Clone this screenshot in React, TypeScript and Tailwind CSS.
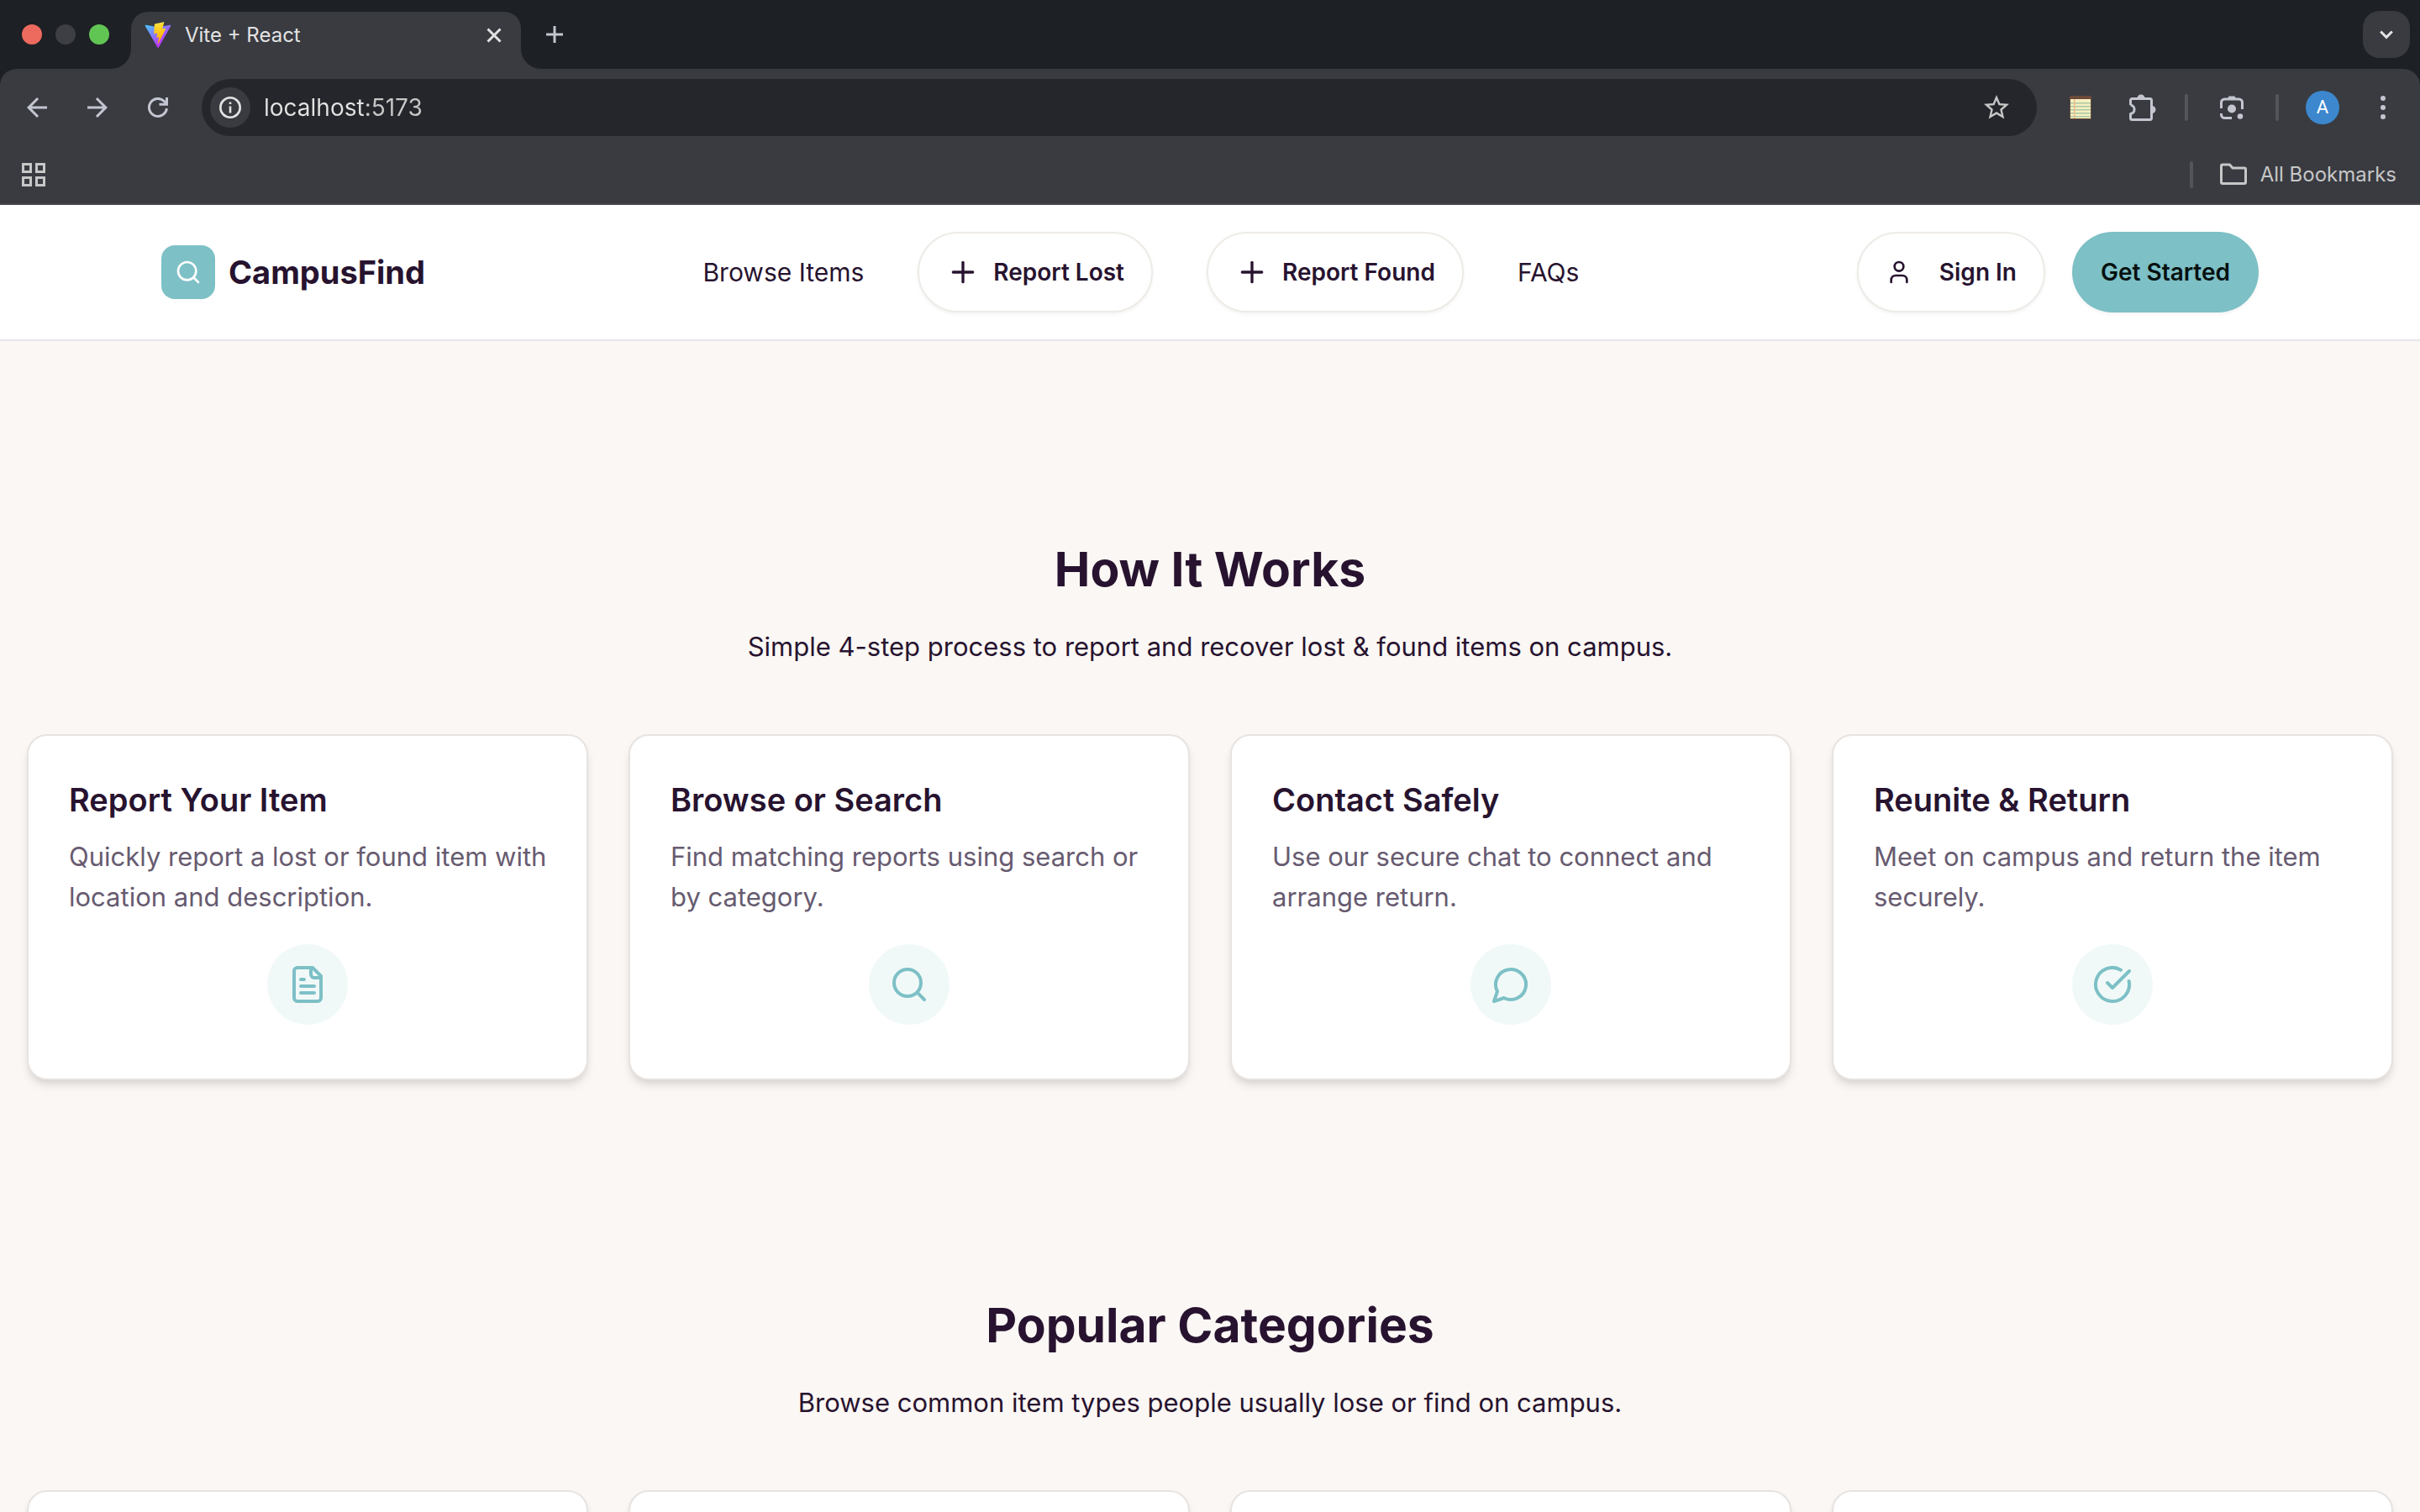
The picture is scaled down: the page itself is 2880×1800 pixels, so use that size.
import React from "react";
import type { ReactNode } from "react";

function ViteLogo() {
  return (
    <svg viewBox="0 0 410 404" className="size-8 shrink-0" aria-hidden="true">
      <defs>
        <linearGradient id="vite-a" x1="6" y1="33" x2="235" y2="344" gradientUnits="userSpaceOnUse">
          <stop stopColor="#41D1FF" />
          <stop offset="1" stopColor="#BD34FE" />
        </linearGradient>
        <linearGradient id="vite-b" x1="194.651" y1="8.818" x2="236.076" y2="292.989" gradientUnits="userSpaceOnUse">
          <stop stopColor="#FFEA83" />
          <stop offset="0.083" stopColor="#FFDD35" />
          <stop offset="1" stopColor="#FFA800" />
        </linearGradient>
      </defs>
      <path
        fill="url(#vite-a)"
        d="M399.641 59.5246L215.643 388.545C211.844 395.338 202.084 395.378 198.228 388.618L10.5817 59.5563C6.38087 52.1896 12.6802 43.2665 21.0281 44.7586L205.223 77.6824C206.398 77.8924 207.601 77.8904 208.776 77.6763L389.119 44.8058C397.439 43.2894 403.768 52.1434 399.641 59.5246Z"
      />
      <path
        fill="url(#vite-b)"
        d="M292.965 1.5744L156.801 28.2552C154.563 28.6937 152.906 30.5903 152.771 32.8664L144.395 174.33C144.198 177.662 147.258 180.248 150.51 179.498L188.42 170.749C191.967 169.931 195.172 173.055 194.443 176.622L183.18 231.775C182.422 235.487 185.907 238.661 189.532 237.56L212.947 230.446C216.577 229.344 220.065 232.527 219.297 236.242L201.398 322.875C200.278 328.294 207.486 331.249 210.492 326.603L212.5 323.5L323.454 102.072C325.312 98.3645 322.108 94.137 318.036 94.9228L279.014 102.454C275.347 103.161 272.227 99.746 273.262 96.1583L298.731 7.86689C299.767 4.27314 296.636 0.855181 292.965 1.5744Z"
      />
    </svg>
  );
}

function Stroke({ className, width = 2, children }: { className: string; width?: number; children: ReactNode }) {
  return (
    <svg
      viewBox="0 0 24 24"
      fill="none"
      stroke="currentColor"
      strokeWidth={width}
      strokeLinecap="round"
      strokeLinejoin="round"
      className={className}
      aria-hidden="true"
    >
      {children}
    </svg>
  );
}

function SearchShape() {
  return (
    <>
      <circle cx="11" cy="11" r="8" />
      <path d="m21 21-4.3-4.3" />
    </>
  );
}

function PlusIcon() {
  return (
    <Stroke className="size-10">
      <path d="M5 12h14" />
      <path d="M12 5v14" />
    </Stroke>
  );
}

function IconButton({ label, children }: { label: string; children: ReactNode }) {
  return (
    <button aria-label={label} className="flex h-12 w-[72px] shrink-0 items-center justify-center text-[#c3c6d0]">
      {children}
    </button>
  );
}

function TabStrip() {
  return (
    <div className="flex h-[82px] items-end pl-[26px] pr-3">
      <div className="mr-0.5 flex h-full items-center gap-4">
        <button aria-label="Close window" className="size-6 rounded-full bg-[#ed6a5e]" />
        <button aria-label="Minimize window" className="size-6 rounded-full bg-[#3e3f44]" />
        <button aria-label="Zoom window" className="size-6 rounded-full bg-[#61c554]" />
      </div>
      <span className="size-6 bg-[#393b41]">
        <span className="block size-full rounded-br-full bg-[#1d2025]" />
      </span>
      <div className="flex h-[68px] w-[464px] items-center gap-4 rounded-t-[20px] bg-[#393b41] pb-3 pl-4 pr-3">
        <ViteLogo />
        <span className="flex-1 text-[24px] leading-8 text-[#e3e3e3]">Vite + React</span>
        <button aria-label="Close tab" className="flex size-10 items-center justify-center text-[#e3e3e3]">
          <svg viewBox="0 0 18 18" className="size-[18px]" fill="none" stroke="currentColor" strokeWidth="3">
            <path d="M1.5 1.5l15 15M16.5 1.5l-15 15" />
          </svg>
        </button>
      </div>
      <span className="size-6 bg-[#393b41]">
        <span className="block size-full rounded-bl-full bg-[#1d2025]" />
      </span>
      <button aria-label="New tab" className="flex h-full w-8 items-center justify-center text-[#c3c6d0]">
        <svg viewBox="0 0 20 20" className="size-5" fill="none" stroke="currentColor" strokeWidth="3">
          <path d="M10 0v20M0 10h20" />
        </svg>
      </button>
      <button
        aria-label="Search tabs"
        className="ml-auto flex size-14 items-center justify-center self-center rounded-[20px] bg-[#393b41] text-[#e3e3e3]"
      >
        <svg viewBox="0 0 16 11" className="h-[11px] w-4" fill="none" stroke="currentColor" strokeWidth="3">
          <path d="M1.2 1.5l6.8 6.8 6.8-6.8" />
        </svg>
      </button>
    </div>
  );
}

function NoteIcon() {
  return (
    <svg viewBox="0 0 26 28" className="h-7 w-[26px]" aria-hidden="true">
      <rect x="0" y="0" width="26" height="28" rx="1" fill="#6b4a38" />
      <rect x="1" y="4" width="24" height="23" fill="#f6efc0" />
      {[8, 12, 16, 20, 24].map((y) => (
        <rect key={y} x="1" y={y} width="24" height="1.5" fill="#a9c8a4" />
      ))}
      <rect x="5" y="4" width="1.5" height="23" fill="#eebb88" />
    </svg>
  );
}

function Toolbar() {
  return (
    <div className="rounded-t-[20px] border-b-2 border-[#4a474c] bg-[#393b41] pt-3">
      <div className="flex h-[68px] items-center px-2">
        <IconButton label="Back">
          <svg viewBox="0 0 24 24" className="size-9" fill="currentColor">
            <path d="M20 11H7.83l5.59-5.59L12 4l-8 8 8 8 1.41-1.41L7.83 13H20v-2z" />
          </svg>
        </IconButton>
        <IconButton label="Forward">
          <svg viewBox="0 0 24 24" className="size-9" fill="currentColor">
            <path d="M4 11h12.17l-5.59-5.59L12 4l8 8-8 8-1.41-1.41L16.17 13H4v-2z" />
          </svg>
        </IconButton>
        <IconButton label="Reload">
          <svg viewBox="0 0 24 24" className="size-6" fill="none" stroke="currentColor" strokeWidth="3">
            <path d="M22.4 13A10.5 10.5 0 1 1 19.5 4.6L22 7.2" />
            <path d="M22.5 0v8.2H13.5" />
          </svg>
        </IconButton>
        <div className="ml-4 flex h-full flex-1 items-center rounded-full bg-[#25262b] pl-2.5 pr-3">
          <button
            aria-label="View site information"
            className="flex size-12 shrink-0 items-center justify-center rounded-full bg-[#393b41] text-[#e3e3e3]"
          >
            <svg viewBox="0 0 26 26" className="size-[26px]" fill="none" stroke="currentColor" strokeWidth="2.6">
              <circle cx="13" cy="13" r="11.7" />
              <path d="M13 11.5v8M13 6.5v2.6" />
            </svg>
          </button>
          <input
            aria-label="Address"
            defaultValue="localhost:5173"
            className="ml-4 h-10 min-w-0 flex-1 bg-[linear-gradient(90deg,#e3e3e3_121px,#c7c7c7_121px)] bg-clip-text text-[28px] leading-10 text-transparent caret-white outline-none"
          />
          <IconButton label="Bookmark this tab">
            <svg viewBox="0 0 24 24" className="size-9" fill="#c7c7c7">
              <path d="M22 9.24l-7.19-.62L12 2 9.19 8.63 2 9.24l5.46 4.73L5.82 21 12 17.27 18.18 21l-1.63-7.03L22 9.24zM12 15.4l-3.76 2.27 1-4.28-3.32-2.88 4.38-.38L12 6.1l1.71 4.04 4.38.38-3.32 2.88 1 4.28L12 15.4z" />
            </svg>
          </IconButton>
        </div>
        <div className="ml-4 flex gap-0.5">
          <IconButton label="Notes extension">
            <NoteIcon />
          </IconButton>
          <IconButton label="Extensions">
            <svg viewBox="0 0 32 32" className="size-8" fill="none" stroke="currentColor" strokeWidth="3">
              <path
                strokeLinejoin="round"
                d="M1.5 13V7.5a2 2 0 0 1 2-2H24.5a2 2 0 0 1 2 2V28.5a2 2 0 0 1-2 2H3.5a2 2 0 0 1-2-2V23.5a5.3 5.3 0 0 0 0-10.5"
              />
              <path fill="currentColor" stroke="none" d="M9.5 5a4.5 4.5 0 0 1 9 0zM27 14a4.5 4.5 0 0 1 0 9z" />
            </svg>
          </IconButton>
        </div>
        <span className="ml-3.5 h-8 w-1 rounded-full bg-[#53555c]" />
        <div className="mx-4">
          <IconButton label="Search with Lens">
            <svg viewBox="0 0 32 32" className="size-8" fill="none" stroke="currentColor" strokeWidth="3">
              <path d="M3.5 17V10a4 4 0 0 1 4-4H24.5a4 4 0 0 1 4 4v8M3.5 23v1.5a4 4 0 0 0 4 4H16" />
              <path fill="currentColor" stroke="none" d="M11 5.5l1.5-3h7l1.5 3z" />
              <circle cx="16" cy="17.5" r="5" fill="currentColor" stroke="none" />
              <circle cx="26" cy="26.5" r="3.3" fill="currentColor" stroke="none" />
            </svg>
          </IconButton>
        </div>
        <span className="h-8 w-1 rounded-full bg-[#53555c]" />
        <button aria-label="Profile" className="ml-4 flex w-[72px] shrink-0 justify-center">
          <span className="flex size-10 items-center justify-center rounded-full bg-[#3c87cd] font-[Roboto] text-[22px] leading-6 text-white">
            A
          </span>
        </button>
        <IconButton label="Menu">
          <svg viewBox="0 0 6 28" className="h-7 w-1.5" fill="currentColor">
            <circle cx="3" cy="3" r="3" />
            <circle cx="3" cy="14" r="3" />
            <circle cx="3" cy="25" r="3" />
          </svg>
        </IconButton>
      </div>
      <div className="mt-3 flex h-[68px] items-center justify-between pl-[26px] pr-7">
        <button aria-label="Apps" className="text-[#c7c7c7]">
          <svg viewBox="0 0 28 28" className="size-7" fill="none" stroke="currentColor" strokeWidth="3">
            <path d="M1.5 1.5h9v9h-9zM17.5 1.5h9v9h-9zM1.5 17.5h9v9h-9zM17.5 17.5h9v9h-9z" />
          </svg>
        </button>
        <div className="flex items-center">
          <span className="mr-8 h-8 w-1 rounded-full bg-[#53555c]" />
          <button className="flex items-center gap-4 text-[24px] leading-8 text-[#c7c7c7]">
            <svg viewBox="0 0 32 28" className="h-7 w-8" fill="none" stroke="currentColor" strokeWidth="3" strokeLinejoin="round">
              <path d="M1.5 3.5a1.5 1.5 0 0 1 1.5-1.5h8.5l3.5 4h14a1.5 1.5 0 0 1 1.5 1.5v15.5a1.5 1.5 0 0 1-1.5 1.5h-26a1.5 1.5 0 0 1-1.5-1.5z" />
            </svg>
            All Bookmarks
          </button>
        </div>
      </div>
    </div>
  );
}

const outline =
  "flex h-24 items-center rounded-full border-2 border-[#eeebe7] bg-white px-8 text-[28px] leading-10 font-semibold shadow-[0_2px_4px_rgba(0,0,0,0.05)]";

function SiteHeader() {
  return (
    <header className="border-b-2 border-[#e5e7eb] bg-white">
      <div className="mx-auto flex max-w-[2560px] items-center justify-between px-8 py-8">
        <a href="#" className="flex items-center gap-4">
          <span className="flex size-16 items-center justify-center rounded-2xl bg-[#7dc0c6] text-white">
            <Stroke className="size-8">
              <SearchShape />
            </Stroke>
          </span>
          <span className="text-[38px] leading-14 font-bold">CampusFind</span>
        </a>
        <nav className="flex items-center gap-16 text-[30px] leading-12">
          <a href="#browse">Browse Items</a>
          <button className={outline + " gap-4"}>
            <PlusIcon />
            Report Lost
          </button>
          <button className={outline + " gap-4"}>
            <PlusIcon />
            Report Found
          </button>
          <a href="#faqs">FAQs</a>
        </nav>
        <div className="flex items-center gap-8">
          <button className={outline + " gap-8"}>
            <Stroke className="size-8">
              <path d="M19 21v-2a4 4 0 0 0-4-4H9a4 4 0 0 0-4 4v2" />
              <circle cx="12" cy="7" r="4" />
            </Stroke>
            Sign In
          </button>
          <button className="flex h-24 items-center rounded-full bg-[#7dc0c6] px-[34px] text-[28px] leading-10 font-semibold text-[#06100f] shadow-[0_2px_4px_rgba(0,0,0,0.05)]">
            Get Started
          </button>
        </div>
      </div>
    </header>
  );
}

const steps: { title: string; text: string; icon: ReactNode }[] = [
  {
    title: "Report Your Item",
    text: "Quickly report a lost or found item with location and description.",
    icon: (
      <>
        <path d="M15 2H6a2 2 0 0 0-2 2v16a2 2 0 0 0 2 2h12a2 2 0 0 0 2-2V7Z" />
        <path d="M14 2v4a2 2 0 0 0 2 2h4" />
        <path d="M10 9H8" />
        <path d="M16 13H8" />
        <path d="M16 17H8" />
      </>
    ),
  },
  {
    title: "Browse or Search",
    text: "Find matching reports using search or by category.",
    icon: <SearchShape />,
  },
  {
    title: "Contact Safely",
    text: "Use our secure chat to connect and arrange return.",
    icon: <path d="M7.9 20A9 9 0 1 0 4 16.1L2 22Z" />,
  },
  {
    title: "Reunite & Return",
    text: "Meet on campus and return the item securely.",
    icon: (
      <>
        <path d="M21.801 10A10 10 0 1 1 17 3.335" />
        <path d="m9 11 3 3L22 4" />
      </>
    ),
  },
];

const card =
  "rounded-3xl border-2 border-[#e7e3e0] bg-white p-12 shadow-[0_8px_12px_-2px_rgba(0,0,0,0.1),0_4px_8px_-4px_rgba(0,0,0,0.1)]";

function Section({ title, subtitle, children }: { title: string; subtitle: string; children: ReactNode }) {
  return (
    <section className="px-8 py-32">
      <div className="mb-20 text-center">
        <h2 className="mb-8 text-[57px] leading-[72px] font-bold">{title}</h2>
        <p className="text-[31px] leading-12">{subtitle}</p>
      </div>
      <div className="grid grid-cols-4 gap-12">{children}</div>
    </section>
  );
}

export default function App() {
  return (
    <div className="flex h-screen flex-col overflow-hidden bg-[#fbf7f4] font-[Inter,sans-serif] text-[#27132f]">
      <div className="shrink-0 bg-[#1d2025]">
        <TabStrip />
        <Toolbar />
      </div>
      <div className="shrink-0">
        <SiteHeader />
      </div>
      <main className="min-h-0 flex-1 overflow-hidden pt-27">
        <Section title="How It Works" subtitle="Simple 4-step process to report and recover lost & found items on campus.">
          {steps.map((step) => (
            <article key={step.title} className={card}>
              <h3 className="mb-4 text-[38px] leading-14 font-semibold">{step.title}</h3>
              <p className="-mr-4 mb-8 text-[31px] leading-12 text-[#675b70]">{step.text}</p>
              <div className="mx-auto mb-4 flex size-24 items-center justify-center rounded-full bg-[#f1f9f8] text-[#7dc0c6]">
                <Stroke className="size-12">{step.icon}</Stroke>
              </div>
            </article>
          ))}
        </Section>
        <Section title="Popular Categories" subtitle="Browse common item types people usually lose or find on campus.">
          {[0, 1, 2, 3].map((n) => (
            <div key={n} className={card} />
          ))}
        </Section>
      </main>
    </div>
  );
}
